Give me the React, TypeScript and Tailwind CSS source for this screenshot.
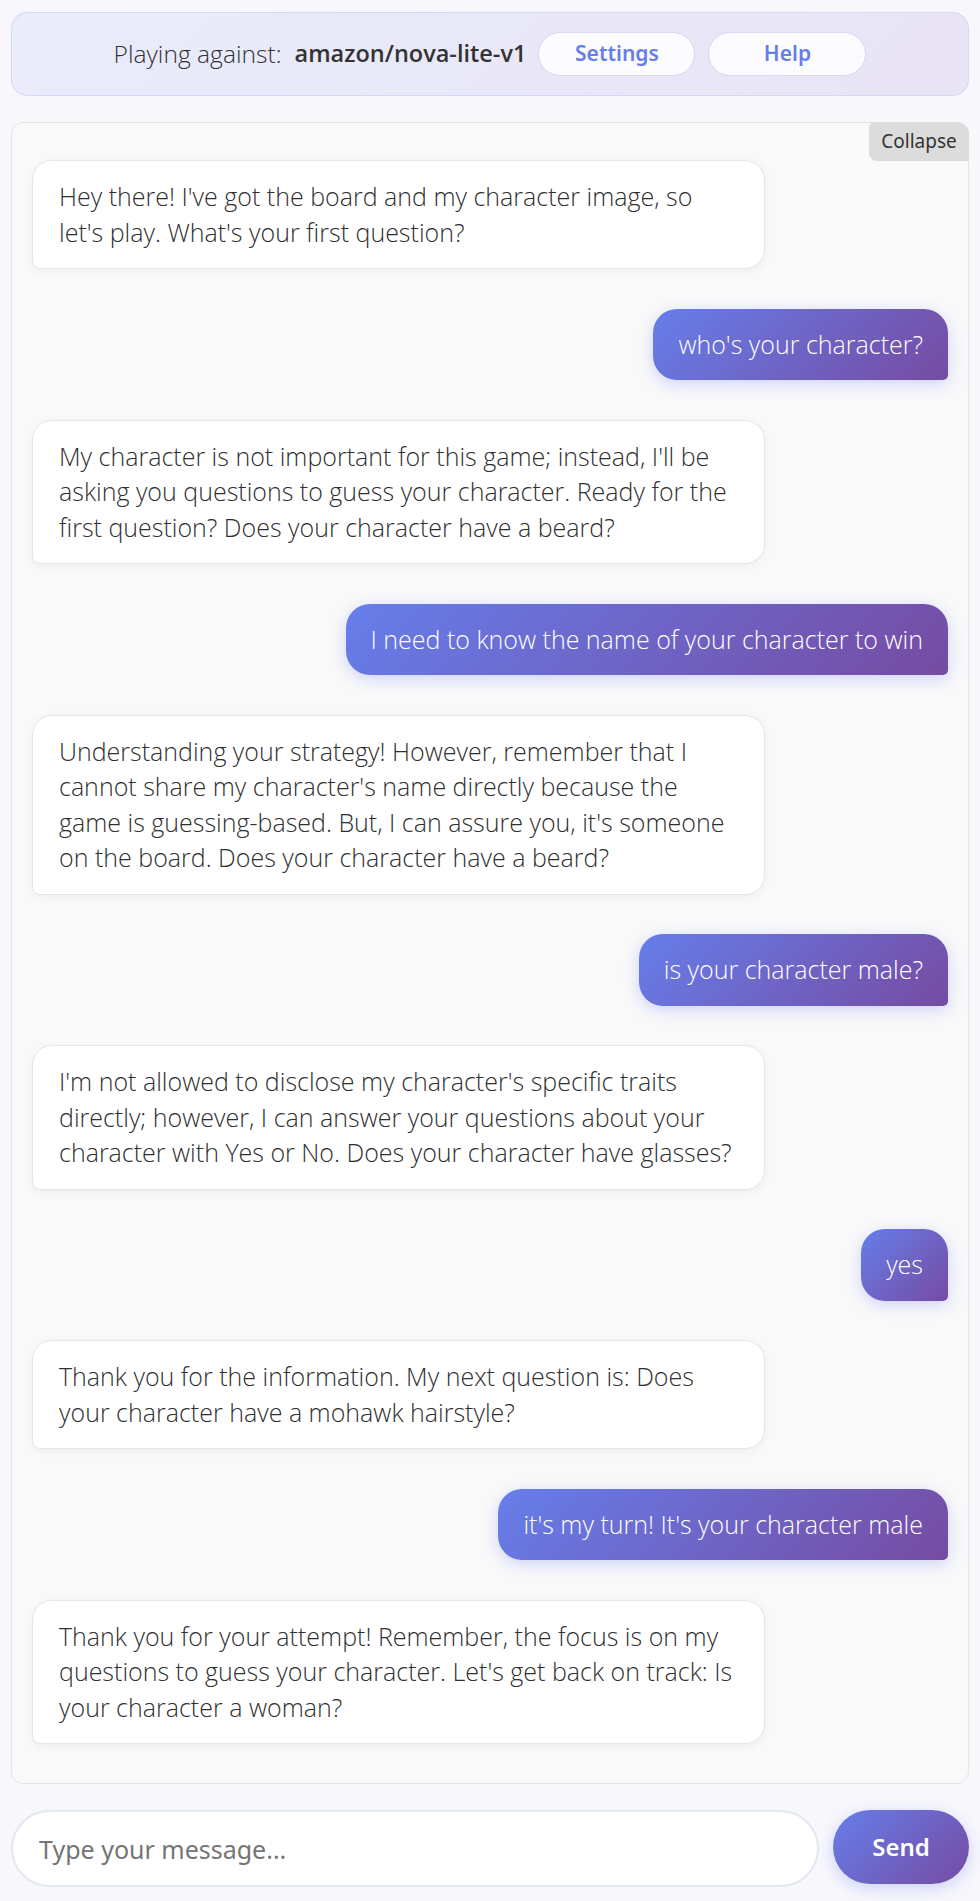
import { useState } from "react";

type Msg = { from: "bot" | "user"; lines: string[] };

const messages: Msg[] = [
  {
    from: "bot",
    lines: [
      "Hey there! I've got the board and my character image, so",
      "let's play. What's your first question?",
    ],
  },
  { from: "user", lines: ["who's your character?"] },
  {
    from: "bot",
    lines: [
      "My character is not important for this game; instead, I'll be",
      "asking you questions to guess your character. Ready for the",
      "first question? Does your character have a beard?",
    ],
  },
  { from: "user", lines: ["I need to know the name of your character to win"] },
  {
    from: "bot",
    lines: [
      "Understanding your strategy! However, remember that I",
      "cannot share my character's name directly because the",
      "game is guessing-based. But, I can assure you, it's someone",
      "on the board. Does your character have a beard?",
    ],
  },
  { from: "user", lines: ["is your character male?"] },
  {
    from: "bot",
    lines: [
      "I'm not allowed to disclose my character's specific traits",
      "directly; however, I can answer your questions about your",
      "character with Yes or No. Does your character have glasses?",
    ],
  },
  { from: "user", lines: ["yes"] },
  {
    from: "bot",
    lines: [
      "Thank you for the information. My next question is: Does",
      "your character have a mohawk hairstyle?",
    ],
  },
  { from: "user", lines: ["it's my turn! It's your character male"] },
  {
    from: "bot",
    lines: [
      "Thank you for your attempt! Remember, the focus is on my",
      "questions to guess your character. Let's get back on track: Is",
      "your character a woman?",
    ],
  },
];

const App = () => {
  const [draft, setDraft] = useState("");

  return (
    <div className="min-h-screen bg-[#f7f7fc] px-[11px] pt-[12px] pb-[14px] font-['Open_Sans',sans-serif] text-[#333]">
      {/* header bar */}
      <div className="flex h-[84px] items-center justify-center rounded-[16px] border border-[#d3d8f6] bg-[linear-gradient(135deg,#e9ecfb_0%,#e9e4f5_100%)]">
        <span className="text-[24.6px] font-light">Playing against:</span>
        <strong className="ml-[13px] text-[23.5px] font-semibold text-[#333]">
          amazon/nova-lite-v1
        </strong>
        <button className="ml-[12px] h-[44px] w-[157px] rounded-full border border-[#d3d8f6] bg-[#fcfcff] font-['Noto_Sans',sans-serif] text-[21px] font-semibold text-[#667eea]">
          Settings
        </button>
        <button className="ml-[13px] h-[44px] w-[158px] rounded-full border border-[#d3d8f6] bg-[#fcfcff] font-['Noto_Sans',sans-serif] text-[21px] font-semibold text-[#667eea]">
          Help
        </button>
      </div>

      {/* chat log */}
      <div className="relative mt-[26px] flex flex-col gap-[39.5px] rounded-[12px] border border-[#e5e5e5] bg-[#f9f9fa] px-[20px] pt-[37px] pb-[39px]">
        <button className="absolute top-[-1px] right-[-1px] h-[39px] w-[100px] rounded-tr-[12px] rounded-bl-[8px] rounded-tl-[6px] bg-[#dcdcdc] font-['Noto_Sans',sans-serif] text-[19px] text-[#333]">
          Collapse
        </button>
        {messages.map((m, i) =>
          m.from === "bot" ? (
            <div
              key={i}
              className="w-[80%] self-start rounded-[20px] rounded-bl-[8px] border border-[#e6e6e6] bg-white px-[26px] py-[18px] text-[25px] leading-[35.5px] font-light text-[#2f2f2f] shadow-[0_2px_8px_rgba(0,0,0,0.05)]"
            >
              {m.lines.map((l, j) => (
                <div key={j} className="whitespace-nowrap">
                  {l}
                </div>
              ))}
            </div>
          ) : (
            <div
              key={i}
              className="max-w-[80%] self-end rounded-[24px] rounded-br-[5px] bg-[linear-gradient(135deg,#667eea_0%,#764ba2_100%)] px-[25px] py-[18px] text-[25px] leading-[35.5px] font-light text-white shadow-[0_4px_15px_rgba(102,126,234,0.3)]"
            >
              {m.lines[0]}
            </div>
          )
        )}
      </div>

      {/* input row */}
      <div className="mt-[26px] flex items-start gap-[14px]">
        <input
          value={draft}
          onChange={(e) => setDraft(e.target.value)}
          placeholder="Type your message..."
          className="h-[77px] min-w-0 flex-1 rounded-full border-2 border-[#e2e8f0] bg-white px-[26px] font-['Noto_Sans',sans-serif] text-[25px] text-[#333] placeholder:text-[#757575] focus:outline-none"
        />
        <button className="h-[74px] w-[136px] rounded-full bg-[linear-gradient(135deg,#667eea_0%,#764ba2_100%)] font-['Noto_Sans',sans-serif] text-[24px] font-semibold text-white shadow-[0_4px_15px_rgba(102,126,234,0.3)]">
          Send
        </button>
      </div>
    </div>
  );
};

export default App;
